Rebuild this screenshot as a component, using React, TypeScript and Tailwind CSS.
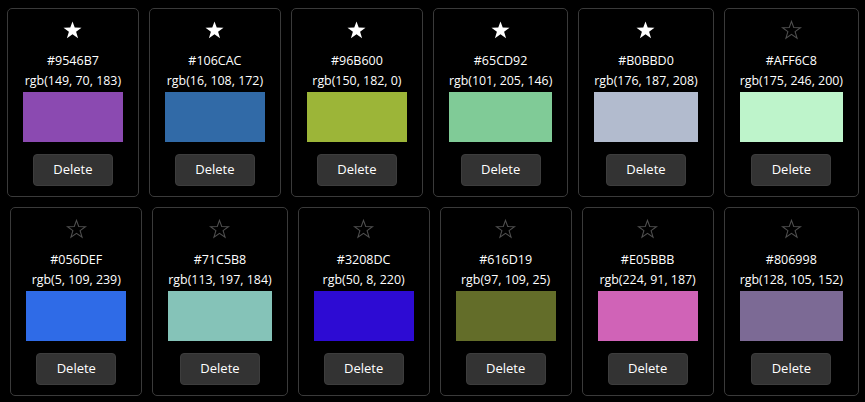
import React from "react";

type C = { hex: string; rgb: [number, number, number]; fav: boolean };

const colors: C[] = [
  { hex: "#9546B7", rgb: [149, 70, 183], fav: true },
  { hex: "#106CAC", rgb: [16, 108, 172], fav: true },
  { hex: "#96B600", rgb: [150, 182, 0], fav: true },
  { hex: "#65CD92", rgb: [101, 205, 146], fav: true },
  { hex: "#B0BBD0", rgb: [176, 187, 208], fav: true },
  { hex: "#AFF6C8", rgb: [175, 246, 200], fav: false },
  { hex: "#056DEF", rgb: [5, 109, 239], fav: false },
  { hex: "#71C5B8", rgb: [113, 197, 184], fav: false },
  { hex: "#3208DC", rgb: [50, 8, 220], fav: false },
  { hex: "#616D19", rgb: [97, 109, 25], fav: false },
  { hex: "#E05BBB", rgb: [224, 91, 187], fav: false },
  { hex: "#806998", rgb: [128, 105, 152], fav: false },
];

// display swatch as it appears on a wide-gamut capture (sRGB -> Display P3 encoding)
function toLin(c: number) {
  const v = c / 255;
  return v <= 0.04045 ? v / 12.92 : Math.pow((v + 0.055) / 1.055, 2.4);
}
function toEnc(v: number) {
  const x = Math.max(0, Math.min(1, v));
  const e = x <= 0.0031308 ? x * 12.92 : 1.055 * Math.pow(x, 1 / 2.4) - 0.055;
  return Math.round(e * 255);
}
function swatch(rgb: [number, number, number]) {
  const [r, g, b] = rgb.map(toLin);
  const R = 0.8225 * r + 0.1774 * g;
  const G = 0.0332 * r + 0.9669 * g;
  const B = 0.0171 * r + 0.0724 * g + 0.9108 * b;
  return `rgb(${toEnc(R)}, ${toEnc(G)}, ${toEnc(B)})`;
}

const STAR =
  "10,0.4 12.35,6.9 19.5,7 13.8,11.3 15.88,18.1 10,14.1 4.12,18.1 6.2,11.3 0.5,7 7.65,6.9";

function Star({ filled }: { filled: boolean }) {
  return (
    <svg width={19} height={18} viewBox="0 0 20 19" className="block overflow-visible">
      {filled ? (
        <polygon points={STAR} fill="#ffffff" />
      ) : (
        <polygon points={STAR} fill="none" stroke="#505050" strokeWidth={1.1} strokeLinejoin="miter" />
      )}
    </svg>
  );
}

function Card({ c }: { c: C }) {
  return (
    <div className="flex flex-col items-center rounded-[5px] border border-[#3a3a3a] bg-black px-[15px] pt-[12px] pb-[10px]">
      <div className="flex h-[18px] items-center justify-center">
        <Star filled={c.fav} />
      </div>
      <div className="mt-[13px] text-[12.5px] leading-[17px] text-white">{c.hex}</div>
      <div className="mt-[3px] whitespace-nowrap text-[12.4px] leading-[17px] text-white">
        rgb({c.rgb[0]}, {c.rgb[1]}, {c.rgb[2]})
      </div>
      <div className="mt-[3px] h-[50px] w-full min-w-[100px]" style={{ backgroundColor: swatch(c.rgb) }} />
      <button className="mt-[12px] flex h-[32px] w-[80px] items-center justify-center rounded-[4px] border border-[#3d3d3d] bg-[#333333] text-[13px] text-white">
        Delete
      </button>
    </div>
  );
}

export default function App() {
  return (
    <div className="min-h-[402px] w-full bg-black">
      <div className="flex flex-wrap justify-end gap-[10px] pl-[2px] pr-[6px] pt-[8px] font-['Open_Sans',sans-serif]">
        {colors.map((c) => (
          <Card key={c.hex} c={c} />
        ))}
      </div>
    </div>
  );
}
